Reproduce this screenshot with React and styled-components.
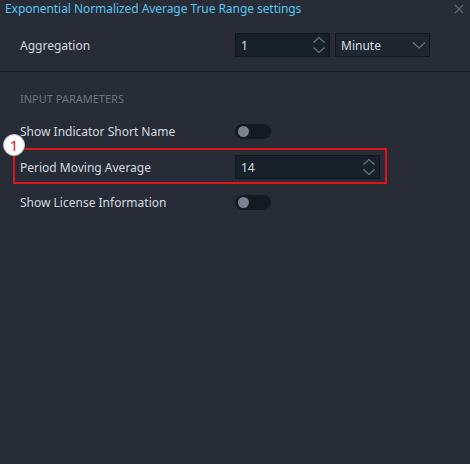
import React from 'react'
import { styled, createGlobalStyle } from 'styled-components'

const Global = createGlobalStyle`
  html, body { margin: 0; padding: 0; background: #272c36; }
  body { font-family: "Noto Sans", "Open Sans", sans-serif; }
`;

const Panel = styled.div`
  width: 470px;
  height: 464px;
  background: #272c36;
  color: #d3dae2;
  font-size: 12px;
  overflow: hidden;
`;

const TitleBar = styled.div`
  height: 18px;
  display: flex;
  align-items: center;
  justify-content: space-between;
  padding: 0 6px 0 5px;
`;

const Title = styled.span`
  color: #56c6f0;
  font-size: 12px;
  letter-spacing: -0.06px;
  margin-top: -2px;
`;

const Close = styled.button`
  border: 0;
  background: none;
  padding: 0;
  width: 10px;
  height: 10px;
  display: flex;
  color: #5c6673;
  margin-top: -1px;
`;

const TopSection = styled.div`
  padding: 15px 0 14px 20px;
  border-bottom: 1px solid #161a21;
`;

const Row = styled.div`
  display: flex;
  align-items: center;
  height: ${p => p.$h || 24}px;
`;

const Label = styled.span`
  width: 215px;
  flex-shrink: 0;
`;

const Field = styled.div`
  width: ${p => p.$w}px;
  height: 24px;
  flex-shrink: 0;
  box-sizing: border-box;
  border: 1px solid #12171e;
  background: ${p => p.$bg || '#18202a'};
  display: flex;
  align-items: center;
  justify-content: space-between;
  padding: 0 3px 0 5px;
  margin-right: 5px;
`;

const Value = styled.span`
  color: #d7dee6;
`;

const Params = styled.div`
  padding: 19px 0 0 20px;
`;

const SectionTitle = styled.div`
  color: #6c7480;
  font-size: 11px;
  height: 16px;
  margin-bottom: 16px;
`;

const Highlight = styled.div`
  position: relative;
  box-sizing: border-box;
  margin: 9px 0 10px -7px;
  padding: 5px 0 3px 5px;
  width: 374px;
  border: 2px solid #e0141c;
`;

const Badge = styled.div`
  position: absolute;
  left: -12px;
  top: -16px;
  width: 20px;
  height: 20px;
  border-radius: 50%;
  background: #fff;
  border: 1px solid #c7c7c7;
  color: #e0141c;
  font-size: 15px;
  display: flex;
  align-items: center;
  justify-content: center;
  line-height: 1;
`;

const Toggle = styled.div`
  width: 36px;
  height: 15px;
  border-radius: 8px;
  background: #141a22;
  display: flex;
  align-items: center;
  padding-left: 3px;
  box-sizing: border-box;
`;

const Knob = styled.div`
  width: 11px;
  height: 11px;
  border-radius: 50%;
  background: #7b828d;
`;

const Spinner = () => (
  <svg width="14" height="20" viewBox="0 0 14 20" fill="none" stroke="#6a7482" strokeWidth="1.2">
    <path d="M1.5 7.5 L7 2.5 L12.5 7.5" />
    <path d="M1.5 12.5 L7 17.5 L12.5 12.5" />
  </svg>
);

const Chevron = () => (
  <svg width="14" height="10" viewBox="0 0 14 10" fill="none" stroke="#6a7482" strokeWidth="1.2">
    <path d="M1 2.5 L7 8 L13 2.5" />
  </svg>
);

const Switch = () => (
  <Toggle><Knob /></Toggle>
);

export default function App() {
  return (
    <Panel>
      <Global />
      <TitleBar>
        <Title>Exponential Normalized Average True Range settings</Title>
        <Close>
          <svg width="10" height="10" viewBox="0 0 10 10" stroke="currentColor" strokeWidth="1.2">
            <path d="M1 1 L9 9 M9 1 L1 9" />
          </svg>
        </Close>
      </TitleBar>
      <TopSection>
        <Row>
          <Label>Aggregation</Label>
          <Field $w={95}><Value>1</Value><Spinner /></Field>
          <Field $w={95} $bg="#1f2630"><Value>Minute</Value><Chevron /></Field>
        </Row>
      </TopSection>
      <Params>
        <SectionTitle>INPUT PARAMETERS</SectionTitle>
        <Row $h={16}>
          <Label>Show Indicator Short Name</Label>
          <Switch />
        </Row>
        <Highlight>
          <Badge>1</Badge>
          <Row>
            <Label>Period Moving Average</Label>
            <Field $w={145}><Value>14</Value><Spinner /></Field>
          </Row>
        </Highlight>
        <Row $h={16}>
          <Label>Show License Information</Label>
          <Switch />
        </Row>
      </Params>
    </Panel>
  );
}
